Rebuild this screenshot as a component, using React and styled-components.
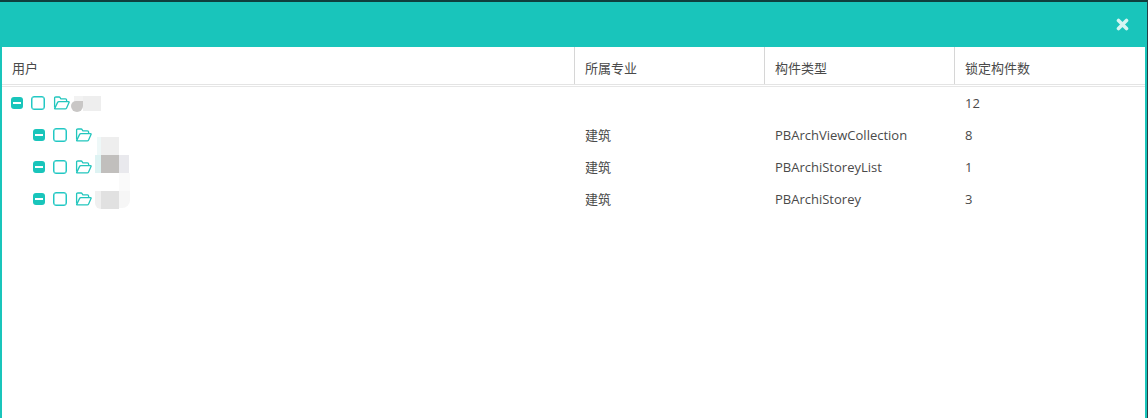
import React from "react";
import styled, { createGlobalStyle } from "styled-components";

const Global = createGlobalStyle`
  html, body { margin: 0; padding: 0; background: #fff; }
  body { font-family: "Open Sans", "Noto Sans CJK SC", sans-serif; font-size: 13px; color: #444; overflow: hidden; }
`;

const Modal = styled.div`
  width: 1148px;
  height: 418px;
  box-sizing: border-box;
  display: flex;
  flex-direction: column;
  background: #fff;
  border-top: 2px solid #0f3f3d;
  border-right: 1px solid #263f46;
`;
const TitleBar = styled.div`
  height: 45px;
  flex: none;
  background: #19c5bb;
  display: flex;
  align-items: center;
  justify-content: flex-end;
  padding: 0 18px 0 0;
`;
const CloseIcon = styled.svg`
  width: 13px;
  height: 13px;
  display: block;
`;
const Body = styled.div`
  flex: 1;
  border-left: 2px solid #19c5bb;
  border-right: 2px solid #19c5bb;
  display: flex;
  flex-direction: column;
`;
const Row = styled.div`
  display: grid;
  grid-template-columns: 572px 190px 190px 1fr;
`;
const Head = styled(Row)`
  height: 37px;
  border-bottom: 1px solid #e4e4e4;
  box-shadow: 0 1px 0 #fff, 0 2px 0 #e6e6e6;
  margin-bottom: 2px;
`;
const HeadCell = styled.div`
  padding: 4px 0 0 10px;
  display: flex;
  align-items: center;
  color: #4a4a4a;
  border-left: ${p => (p.$first ? "none" : "1px solid #d6d6d6")};
`;
const DataRow = styled(Row)`
  height: 32px;
`;
const Cell = styled.div`
  padding: 0 0 ${p => (p.$cjk ? 2 : 0)}px 11px;
  display: flex;
  align-items: center;
  color: #4a4a4a;
`;
const NameCell = styled.div`
  display: flex;
  align-items: center;
  padding-left: ${p => (p.$depth ? 31 : 9)}px;
  position: relative;
`;
const Minus = styled.span`
  width: 12px;
  height: 12px;
  border-radius: 3px;
  background: #19c5bb;
  display: flex;
  align-items: center;
  justify-content: center;
  &::after {
    content: "";
    width: 8px;
    height: 2px;
    background: #fff;
  }
`;
const Check = styled.span`
  width: 12px;
  height: 12px;
  margin-left: 8px;
  border: 1px solid #22c8c4;
  border-radius: 3px;
  box-shadow: inset 0 0 0 0.5px #22c8c4;
`;
const FolderIcon = styled.svg`
  width: 17px;
  height: 14px;
  margin-left: 8px;
  display: block;
  fill: none;
  stroke: #22c6bd;
  stroke-width: 1.3;
  stroke-linejoin: round;
`;
const Blur = styled.span`
  position: absolute;
  left: ${p => p.$x}px;
  top: ${p => p.$y}px;
  width: ${p => p.$w}px;
  height: ${p => p.$h}px;
  background: ${p => p.$c};
  border-radius: ${p => p.$r || "0"};
`;

const rows = [
  { depth: 0, major: "", type: "", count: "12", blurs: [
    { x: 72, y: 9, w: 9, h: 5, c: "#f2f2f2" },
    { x: 69, y: 14, w: 12, h: 11, c: "#c9c7c6", r: "5px 0 6px 6px" },
    { x: 81, y: 9, w: 18, h: 15, c: "#eeeeee" },
  ] },
  { depth: 1, major: "建筑", type: "PBArchViewCollection", count: "8", blurs: [
    { x: 95, y: 18, w: 4, h: 18, c: "#eef8f8" },
    { x: 99, y: 18, w: 18, h: 18, c: "#eeeeee" },
  ] },
  { depth: 1, major: "建筑", type: "PBArchiStoreyList", count: "1", blurs: [
    { x: 93, y: 4, w: 6, h: 18, c: "#def3f3" },
    { x: 99, y: 4, w: 18, h: 18, c: "#c1bfbd" },
    { x: 117, y: 4, w: 10, h: 18, c: "#e9e9ed" },
    { x: 117, y: 22, w: 11, h: 18, c: "#fafafa" },
  ] },
  { depth: 1, major: "建筑", type: "PBArchiStorey", count: "3", blurs: [
    { x: 93, y: 8, w: 6, h: 18, c: "#f0f0f0", r: "0 0 0 6px" },
    { x: 99, y: 8, w: 18, h: 18, c: "#e1e1e1" },
    { x: 117, y: 8, w: 11, h: 17, c: "#f6f6f6", r: "0 0 8px 0" },
  ] },
];

export default function App() {
  return (
    <>
      <Global />
      <Modal>
        <TitleBar>
          <CloseIcon viewBox="0 0 13 13">
            <path d="M2.5 2.5L10.5 10.5M10.5 2.5L2.5 10.5" stroke="#d6f5f2" strokeWidth="3.6" strokeLinecap="round" />
          </CloseIcon>
        </TitleBar>
        <Body>
          <Head>
            <HeadCell $first>用户</HeadCell>
            <HeadCell>所属专业</HeadCell>
            <HeadCell>构件类型</HeadCell>
            <HeadCell>锁定构件数</HeadCell>
          </Head>
          {rows.map((r, i) => (
            <DataRow key={i}>
              <NameCell $depth={r.depth}>
                <Minus />
                <Check />
                <FolderIcon viewBox="0 0 17 14">
                  <path d="M1.6 11.5V2.2Q1.6 1 2.8 1H6Q6.8 1 7.2 1.8L7.7 2.8H12.4Q13.6 2.8 13.6 4V5.6" />
                  <path d="M1.6 12.6L4.6 6.4Q5 5.6 5.9 5.6H15.4Q16.5 5.6 16 6.6L13.6 11.9Q13.2 12.8 12.2 12.8H2Z" />
                </FolderIcon>
                {r.blurs.map((b, j) => (
                  <Blur key={j} $x={b.x} $y={b.y} $w={b.w} $h={b.h} $c={b.c} $r={b.r} />
                ))}
              </NameCell>
              <Cell $cjk>{r.major}</Cell>
              <Cell>{r.type}</Cell>
              <Cell>{r.count}</Cell>
            </DataRow>
          ))}
        </Body>
      </Modal>
    </>
  );
}
